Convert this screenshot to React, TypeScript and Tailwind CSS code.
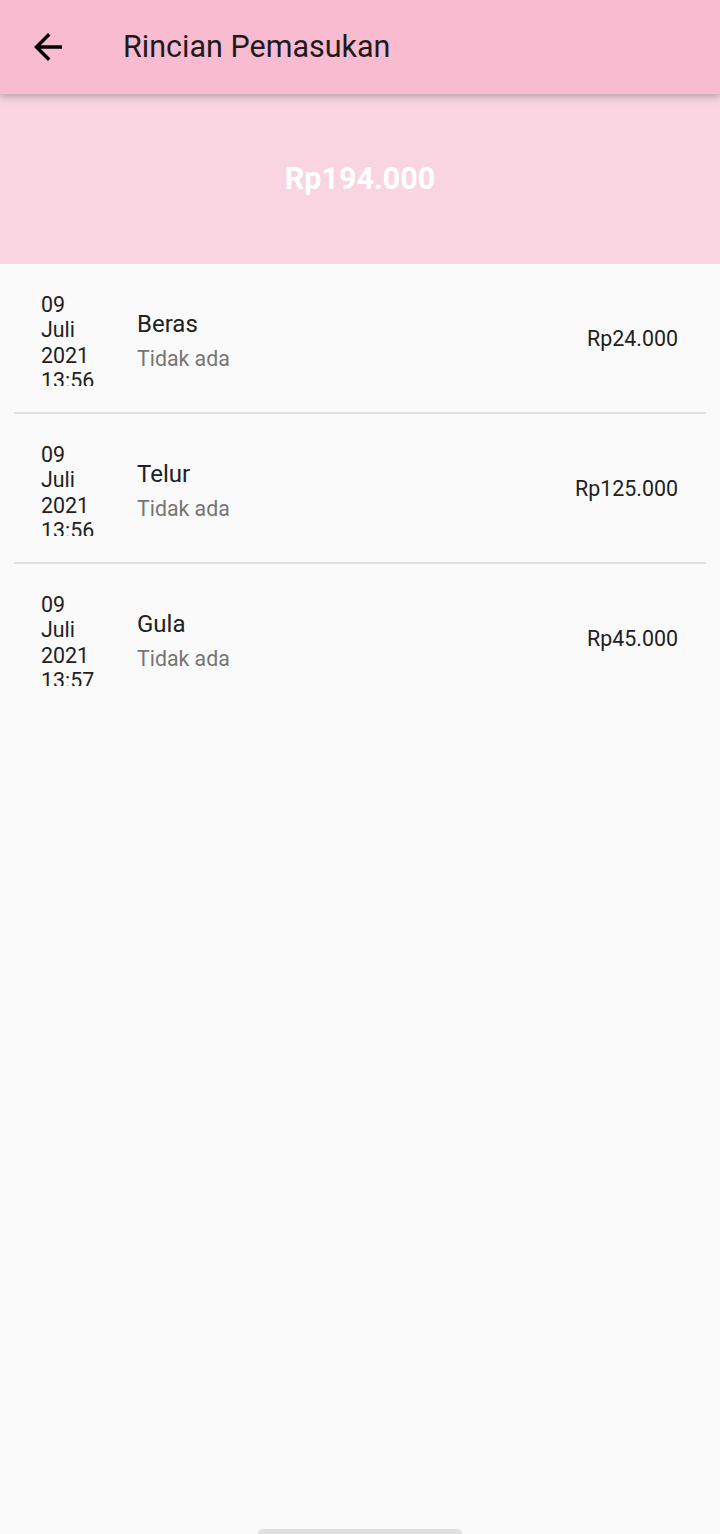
import React from "react";

const items = [
  { d: "09", m: "Juli", y: "2021", t: "13:56", name: "Beras", amount: "Rp24.000" },
  { d: "09", m: "Juli", y: "2021", t: "13:56", name: "Telur", amount: "Rp125.000" },
  { d: "09", m: "Juli", y: "2021", t: "13:57", name: "Gula", amount: "Rp45.000" },
];

export default function App() {
  return (
    <div
      className="relative w-[720px] h-[1534px] bg-[#fafafa] overflow-hidden"
      style={{ fontFamily: "Roboto, 'Noto Sans', sans-serif" }}
    >
      <div className="relative z-10 h-[94px] bg-[#f8bbd0] flex items-center shadow-[0_3px_8px_rgba(0,0,0,0.25)]">
        <div className="w-[42px] h-[42px] ml-[27px] flex items-center justify-center">
          <svg width="42" height="42" viewBox="0 0 24 24">
            <path d="M20 11H7.83l5.59-5.59L12 4l-8 8 8 8 1.41-1.41L7.83 13H20v-2z" fill="#000" />
          </svg>
        </div>
        <div className="ml-[54px] text-[30.5px] text-[#1e1a1c] leading-none font-normal">Rincian Pemasukan</div>
      </div>
      <div className="h-[170px] bg-[#f8d5e1] flex justify-center pt-[65px]">
        <div className="text-[30.5px] font-bold text-white leading-[40px]">Rp194.000</div>
      </div>
      <div className="px-[14px]">
        {items.map((it, i) => (
          <div key={i} className={`h-[150px] flex items-start ${i < items.length - 1 ? "border-b-2 border-[#e0e0e0]" : ""}`}>
            <div className="w-[123px] pl-[27px] mt-[28px] h-[94px] overflow-hidden text-[21.4px] leading-[25.3px] text-[#212121]">
              <div>{it.d}</div>
              <div>{it.m}</div>
              <div>{it.y}</div>
              <div>{it.t}</div>
            </div>
            <div className="flex-1 flex flex-col mt-[46px]">
              <div className="text-[24px] leading-[28px] text-[#212121]">{it.name}</div>
              <div className="text-[21.3px] leading-[26px] text-[#757575] mt-[8px]">Tidak ada</div>
            </div>
            <div className="pr-[28px] mt-[62px] text-[21.4px] leading-[26px] text-[#212121]">{it.amount}</div>
          </div>
        ))}
      </div>
      <div className="absolute left-[258px] bottom-0 w-[204px] h-[5px] rounded-t-full bg-[#e0e0e0]" />
    </div>
  );
}
